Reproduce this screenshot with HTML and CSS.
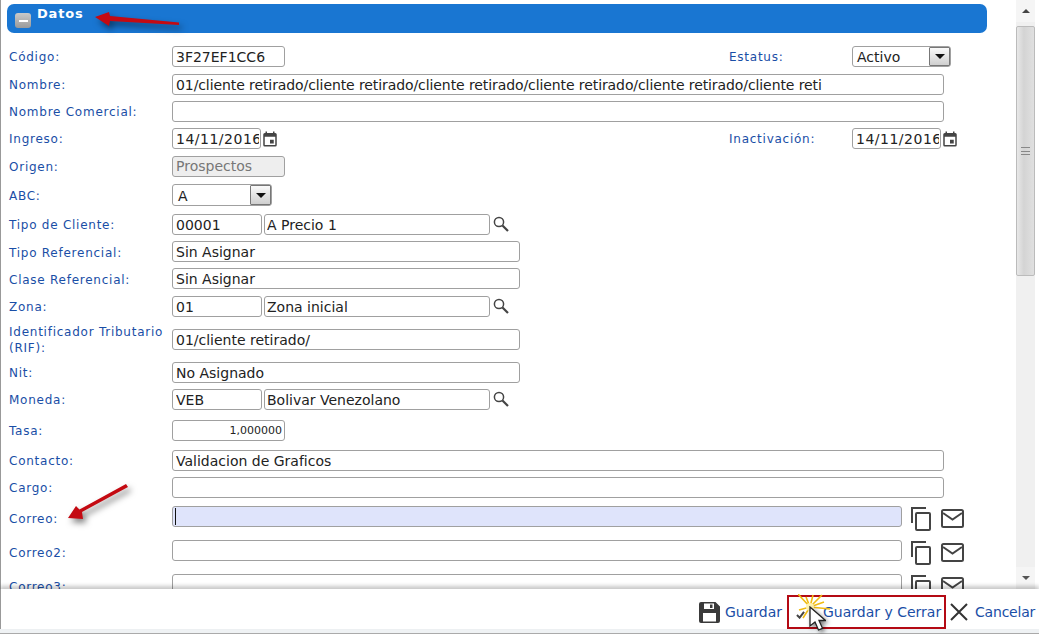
FILE: index.html
```html
<!DOCTYPE html>
<html lang="es">
<head>
<meta charset="utf-8">
<title>Datos</title>
<link rel="stylesheet" href="styles.css">
</head>
<body>
<div class="app">
  <div class="main">
    <div class="content">
      <div class="panel-head">
        <span class="collapse"><span class="collapse-bar"></span></span>
        <span class="panel-title">Datos</span>
      </div>
      <form class="form">
        <label class="lbl">Código:</label>
        <div class="val split">
          <input class="inp w113" value="3F27EF1CC6">
          <div class="side">
            <label class="lbl side-lbl">Estatus:</label>
            <div class="sel w99"><span class="sel-text">Activo</span><span class="sel-btn"><span class="tri"></span></span></div>
          </div>
        </div>
        <label class="lbl">Nombre:</label>
        <div class="val"><input class="inp w772 long" value="01/cliente retirado/cliente retirado/cliente retirado/cliente retirado/cliente retirado/cliente reti"></div>
        <label class="lbl">Nombre Comercial:</label>
        <div class="val"><input class="inp w772" value=""></div>
        <label class="lbl">Ingreso:</label>
        <div class="val split">
          <div class="date"><input class="inp w89 date-inp" value="14/11/2016"><svg class="ic-cal" viewBox="0 0 24 24"><path d="M19 4h-1V2h-2v2H8V2H6v2H5a2 2 0 0 0-2 2v14a2 2 0 0 0 2 2h14a2 2 0 0 0 2-2V6a2 2 0 0 0-2-2zm0 16H5V9h14v11zM12 13h5v5h-5z"/></svg></div>
          <div class="side">
            <label class="lbl side-lbl">Inactivación:</label>
            <div class="date"><input class="inp w89 date-inp" value="14/11/2016"><svg class="ic-cal" viewBox="0 0 24 24"><path d="M19 4h-1V2h-2v2H8V2H6v2H5a2 2 0 0 0-2 2v14a2 2 0 0 0 2 2h14a2 2 0 0 0 2-2V6a2 2 0 0 0-2-2zm0 16H5V9h14v11zM12 13h5v5h-5z"/></svg></div>
          </div>
        </div>
        <label class="lbl">Origen:</label>
        <div class="val"><input class="inp w113 off" value="Prospectos" disabled></div>
        <label class="lbl abc">ABC:</label>
        <div class="val"><div class="sel w100 tall"><span class="sel-text">A</span><span class="sel-btn"><span class="tri"></span></span></div></div>
        <label class="lbl">Tipo de Cliente:</label>
        <div class="val look">
          <input class="inp w90" value="00001"><input class="inp w226 tight" value="A Precio 1">
          <svg class="ic-search" viewBox="0 0 18 18"><circle cx="7" cy="7" r="4.6"/><path class="handle" d="M10.5 10.5 16 16"/></svg>
        </div>
        <label class="lbl">Tipo Referencial:</label>
        <div class="val"><input class="inp w348 up" value="Sin Asignar"></div>
        <label class="lbl">Clase Referencial:</label>
        <div class="val"><input class="inp w348 up" value="Sin Asignar"></div>
        <label class="lbl">Zona:</label>
        <div class="val look">
          <input class="inp w90" value="01"><input class="inp w226 tight" value="Zona inicial">
          <svg class="ic-search" viewBox="0 0 18 18"><circle cx="7" cy="7" r="4.6"/><path class="handle" d="M10.5 10.5 16 16"/></svg>
        </div>
        <label class="lbl two">Identificador Tributario (RIF):</label>
        <div class="val pad6"><input class="inp w348" value="01/cliente retirado/"></div>
        <label class="lbl">Nit:</label>
        <div class="val"><input class="inp w348" value="No Asignado"></div>
        <label class="lbl">Moneda:</label>
        <div class="val look">
          <input class="inp w90" value="VEB"><input class="inp w226 tight" value="Bolivar Venezolano">
          <svg class="ic-search" viewBox="0 0 18 18"><circle cx="7" cy="7" r="4.6"/><path class="handle" d="M10.5 10.5 16 16"/></svg>
        </div>
        <label class="lbl">Tasa:</label>
        <div class="val"><input class="inp w113 num" value="1,000000"></div>
        <label class="lbl">Contacto:</label>
        <div class="val"><input class="inp w772" value="Validacion de Graficos"></div>
        <label class="lbl">Cargo:</label>
        <div class="val"><input class="inp w772" value=""></div>
        <label class="lbl low">Correo:</label>
        <div class="val mail">
          <div class="inp w730 focus"><span class="caret"></span></div>
          <svg class="ic-copy" viewBox="0 0 20 24"><path d="M15 1H1v15"/><rect x="5" y="6" width="14" height="17" rx="1"/></svg>
          <svg class="ic-mail" viewBox="0 0 23 19"><rect x="1" y="1" width="21" height="17" rx="1.500"/><path d="M2 4l9.500 6.500L21 4"/></svg>
        </div>
        <label class="lbl low">Correo2:</label>
        <div class="val mail">
          <input class="inp w730" value="">
          <svg class="ic-copy" viewBox="0 0 20 24"><path d="M15 1H1v15"/><rect x="5" y="6" width="14" height="17" rx="1"/></svg>
          <svg class="ic-mail" viewBox="0 0 23 19"><rect x="1" y="1" width="21" height="17" rx="1.500"/><path d="M2 4l9.500 6.500L21 4"/></svg>
        </div>
        <label class="lbl low">Correo3:</label>
        <div class="val mail">
          <input class="inp w730" value="">
          <svg class="ic-copy" viewBox="0 0 20 24"><path d="M15 1H1v15"/><rect x="5" y="6" width="14" height="17" rx="1"/></svg>
          <svg class="ic-mail" viewBox="0 0 23 19"><rect x="1" y="1" width="21" height="17" rx="1.500"/><path d="M2 4l9.500 6.500L21 4"/></svg>
        </div>
      </form>
    </div>
    <div class="scroll">
      <div class="sb-btn"><span class="sb-up"></span></div>
      <div class="sb-thumb"><span class="grip"></span></div>
      <div class="sb-track"></div>
      <div class="sb-btn"><span class="sb-down"></span></div>
    </div>
  </div>
  <div class="foot">
    <a class="act">
      <svg class="ic-save" viewBox="0 0 21 21"><path fill-rule="evenodd" d="M2 0h14.500L21 4.500V19a2 2 0 0 1-2 2H2a2 2 0 0 1-2-2V2a2 2 0 0 1 2-2zM5 1.500V7h10V1.500zM11 2.500h2.500V6H11zM4 11v8.500h13V11z"/></svg>
      <span>Guardar</span>
    </a>
    <a class="act boxed">
      <svg class="ic-check" viewBox="0 0 10 9"><path d="M1 4.500l3 3L9 1"/></svg>
      <span class="boxed-text">Guardar y Cerrar</span>
      <svg class="burst" viewBox="0 0 34 30"><g class="rays"><path d="M12 13 0 0M12 13l3-12M12 13 24 1M12 13l20 2M12 13 1 16M12 13l10 11M12 13 5 24M12 13 8 3M12 13l14-5"/></g><circle class="glow" cx="12" cy="13" r="4"/></svg>
      <svg class="cursor" viewBox="0 0 18 26"><path d="M2 1v19l5-4 3.500 8 4-1.700L11 14.500h6.500z"/></svg>
    </a>
    <a class="act">
      <svg class="ic-x" viewBox="0 0 20 20"><path d="M2 2l16 16M18 2 2 18"/></svg>
      <span class="cancel-text">Cancelar</span>
    </a>
  </div>
  <div class="strip"></div>
  <svg class="note note-a" viewBox="0 0 100 30"><path d="M5 13 19 8l1 4 69 6.500V21l-69-4-1 5z"/></svg>
  <svg class="note note-b" viewBox="0 0 80 50"><path d="M68 7 22 32l1 7-15-1 8-12 3.500 3.500L66 4z"/></svg>
</div>
</body>
</html>
```
FILE: styles.css
```css
* { box-sizing: border-box; }
html, body { margin: 0; height: 100%; background: #fff; overflow: hidden; }
body { font-family: "DejaVu Sans", Verdana, sans-serif; }
.app { position: relative; width: 1039px; height: 634px; display: flex; flex-direction: column; }
.main { height: 589px; display: flex; overflow: hidden; border-left: 1px solid #999; }
.content { width: 1015px; flex: none; padding: 4px 0 0 6px; overflow: hidden; }
.panel-head { width: 980px; height: 29px; background: #1976d2; border-radius: 7px; display: flex; align-items: flex-start; }
.collapse { width: 16px; height: 15px; margin: 9px 0 0 8px; border-radius: 3px; background: linear-gradient(#c9c9c9, #9a9a9a); display: flex; align-items: center; justify-content: center; }
.collapse-bar { width: 9px; height: 2px; background: #fff; }
.panel-title { margin: 2px 0 0 6px; color: #fff; font-size: 13px; font-weight: bold; line-height: 15px; letter-spacing: .8px; }
.form { display: grid; grid-template-columns: 163px 1fr; grid-template-rows: 28px 27px 27px 28px 28px 30px 28px 27px 27px 27px 39px 27px 31px 30px 27px 29px 34px 34px 34px; margin: 13px 0 0 2px; }
.lbl { color: #1a4ea6; font-size: 12px; line-height: 21px; padding-top: 1px; letter-spacing: .75px; white-space: nowrap; }
.lbl.two { white-space: normal; line-height: 16px; padding-top: 1px; width: 158px; }
.lbl.low { padding-top: 3px; }
.lbl.abc { line-height: 22px; padding-top: 1px; }
.val { display: flex; align-items: flex-start; min-width: 0; }
.pad6 { padding-top: 6px; }
.split { width: 779px; justify-content: space-between; }
.side { display: flex; width: 222px; }
.side-lbl { width: 123px; flex: none; }
.inp { height: 21px; border: 1px solid #a0a0a0; border-radius: 3px; background: #fff; font: 14px/19px "DejaVu Sans", Verdana, sans-serif; color: #222; padding: 0 3px; margin: 0; outline: none; flex: none; }
.w113 { width: 113px; }
.w772 { width: 772px; }
.w89 { width: 89px; }
.w90 { width: 90px; }
.w226 { width: 226px; }
.w348 { width: 348px; }
.w730 { width: 730px; }
.long { letter-spacing: -.09px; }
.up { margin-top: -1px; }
.tight { margin-left: 2px; padding: 0 2px; }
.off { background: #eee; color: #777; padding-bottom: 2px; }
.num { text-align: right; font-size: 11px; padding-right: 2px; }
.focus { background: #dfe4fb; display: flex; align-items: center; padding-left: 2px; }
.caret { width: 1px; height: 17px; background: #111; }
.date { display: flex; align-items: flex-start; }
.date-inp { padding: 0 1px 0 3px; letter-spacing: .5px; }
.ic-cal { width: 18px; height: 18px; margin: 2px 0 0 0; fill: #444; }
.sel { height: 21px; border: 1px solid #a0a0a0; border-radius: 3px; display: flex; justify-content: space-between; background: #fff; }
.w99 { width: 99px; }
.w100 { width: 100px; }
.tall { height: 22px; }
.sel-text { font-size: 14px; line-height: 21px; padding-left: 4px; color: #222; }
.tall .sel-text { padding-left: 5px; line-height: 22px; }
.sel-btn { width: 21px; background: linear-gradient(#fafafa, #cfcfcf); border: 1px solid #777; border-radius: 1px; display: flex; align-items: center; justify-content: center; }
.tri { width: 0; height: 0; border-left: 5px solid transparent; border-right: 5px solid transparent; border-top: 5px solid #111; }
.ic-search { width: 18px; height: 18px; margin: 1px 0 0 2px; fill: none; stroke: #444; stroke-width: 1.500; flex: none; }
.handle { stroke-width: 2.200; }
.ic-copy { width: 20px; height: 24px; margin: 1px 0 0 9px; fill: none; stroke: #444; stroke-width: 2; flex: none; }
.ic-mail { width: 23px; height: 19px; margin: 3px 0 0 10px; fill: none; stroke: #444; stroke-width: 2; flex: none; }
.scroll { width: 19px; flex: none; display: flex; flex-direction: column; background: #f0f0f0; }
.sb-btn { height: 22px; display: flex; align-items: center; justify-content: center; background: #f5f5f5; flex: none; }
.sb-up { width: 0; height: 0; border-left: 4px solid transparent; border-right: 4px solid transparent; border-bottom: 4px solid #444; }
.sb-down { width: 0; height: 0; border-left: 4px solid transparent; border-right: 4px solid transparent; border-top: 4px solid #555; }
.sb-thumb { height: 250px; margin-top: 4px; flex: none; border: 1px solid #bbb; border-radius: 2px; background: linear-gradient(90deg, #e8e8e8, #d4d4d4 40%, #e0e0e0); display: flex; align-items: center; justify-content: center; }
.grip { width: 9px; height: 8px; border-top: 1px solid #888; border-bottom: 1px solid #888; background: linear-gradient(#888, #888) center / 100% 1px no-repeat; }
.sb-track { flex: 1; }
.foot { position: relative; height: 40px; display: flex; justify-content: flex-end; align-items: stretch; padding: 6px 5px 0 0; border-left: 1px solid #999; box-shadow: 0 -3px 4px rgba(0,0,0,.22); background: #fff; }
.act { display: flex; align-items: flex-start; color: #1a4ea6; font-size: 14px; line-height: 34px; white-space: nowrap; }
.act span { display: block; }
.cancel-text { width: 59px; letter-spacing: -.2px; }
.ic-save { width: 21px; height: 21px; margin: 7px 5px 0 0; fill: #3a3a3a; flex: none; }
.boxed { position: relative; margin-left: 5px; width: 159px; height: 34px; border: 2px solid #b40a14; line-height: 30px; padding-left: 7px; }
.boxed-text { margin-left: 18px; }
.ic-check { width: 9px; height: 8px; margin-top: 14px; fill: none; stroke: #444; stroke-width: 2.200; flex: none; }
.burst { position: absolute; left: 9px; top: -3px; width: 34px; height: 30px; stroke: #f0bc14; stroke-width: 1.600; fill: none; }
.glow { fill: #fff3b0; stroke: none; }
.cursor { position: absolute; left: 19px; top: 9px; width: 18px; height: 26px; fill: #fff; stroke: #222; stroke-width: 1.300; filter: drop-shadow(2px 2px 2px rgba(0,0,0,.5)); }
.ic-x { width: 20px; height: 20px; margin: 7px 6px 0 3px; fill: none; stroke: #333; stroke-width: 2; flex: none; }
.strip { height: 5px; flex: none; background: #eff2f4; border-bottom: 1px solid #aaa; }
.note { position: absolute; fill: #c40a12; filter: drop-shadow(3px 4px 3px rgba(0,0,0,.5)); }
.note-a { left: 90px; top: 4px; width: 100px; height: 30px; }
.note-b { left: 60px; top: 480px; width: 80px; height: 50px; }
```
